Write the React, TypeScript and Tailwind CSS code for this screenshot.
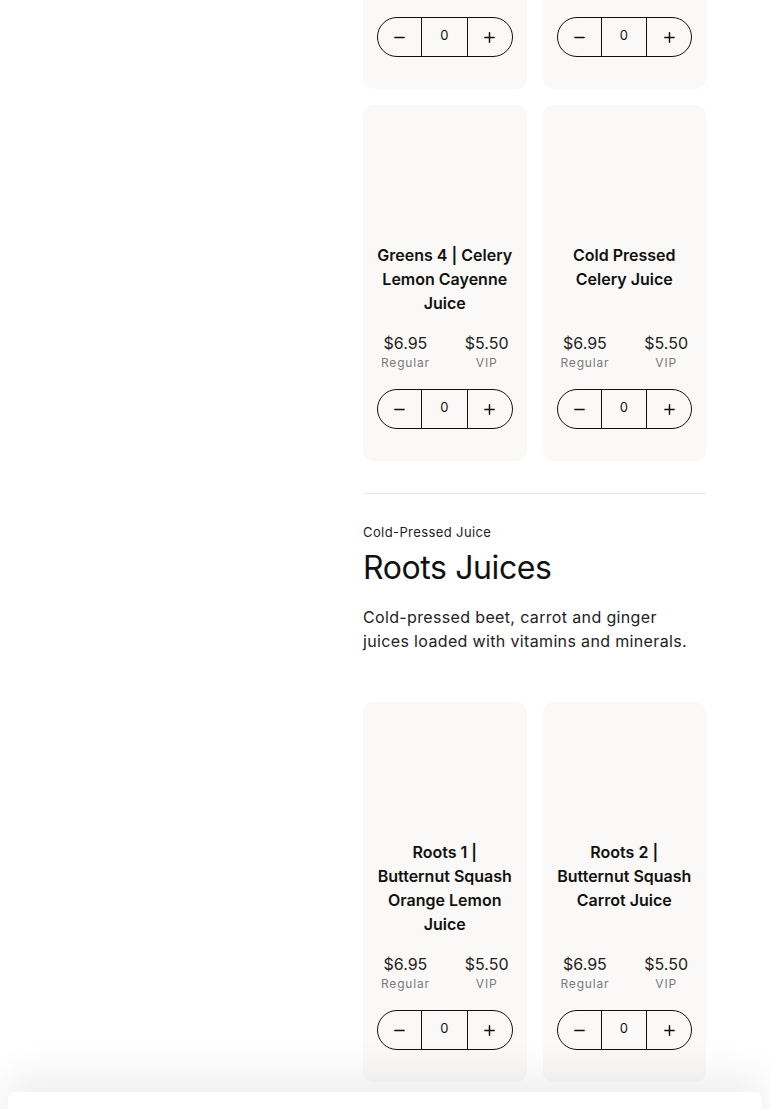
import React from "react";

type P = { title: string[] };

const Minus = () => (
  <svg width="13" height="13" viewBox="0 0 14 14" fill="none">
    <path d="M2 7h10" stroke="#111" strokeWidth="1.6" strokeLinecap="round" />
  </svg>
);
const Plus = () => (
  <svg width="13" height="13" viewBox="0 0 14 14" fill="none">
    <path d="M2 7h10M7 2v10" stroke="#111" strokeWidth="1.6" strokeLinecap="round" />
  </svg>
);

function Stepper() {
  return (
    <div className="flex h-[40px] w-full rounded-full border-[1.5px] border-[#111] overflow-hidden">
      <button className="w-[44px] flex items-center justify-center border-r-[1.5px] border-[#111]">
        <Minus />
      </button>
      <div className="flex-1 flex items-center justify-center text-[13px] text-[#111] pb-[3px]">0</div>
      <button className="w-[45px] flex items-center justify-center border-l-[1.5px] border-[#111]">
        <Plus />
      </button>
    </div>
  );
}

function Card({ title }: P) {
  return (
    <div className="bg-[#faf9f7] rounded-[10px] px-[14px] pb-[32px] flex flex-col">
      <div className="h-[138px] shrink-0" />
      <div className="text-center text-[16px] leading-[24px] font-semibold tracking-[0px] text-[#111]">
        {title.map((t, i) => (
          <div key={i} className="whitespace-nowrap">{t}</div>
        ))}
      </div>
      <div className="mt-auto pt-[18px] flex justify-between px-[4px]">
        <div className="flex flex-col items-center">
          <span className="text-[16px] leading-[20px] text-[#222]">$6.95</span>
          <span className="text-[12px] leading-[20px] tracking-[0.8px] text-[#7a7a7a]">Regular</span>
        </div>
        <div className="flex flex-col items-center">
          <span className="text-[16px] leading-[20px] text-[#222]">$5.50</span>
          <span className="text-[12px] leading-[20px] tracking-[0.8px] text-[#7a7a7a]">VIP</span>
        </div>
      </div>
      <div className="mt-[16px]">
        <Stepper />
      </div>
    </div>
  );
}

export default function App() {
  return (
    <div
      className="min-h-[1109px] bg-white overflow-hidden"
      style={{ fontFamily: "Inter, 'Noto Sans', sans-serif" }}
    >
      <div className="flex">
        <aside className="w-[363px] shrink-0" />
        <main className="w-[343px] shrink-0 mt-[-267px]">
          <div className="grid grid-cols-2 gap-x-4 gap-y-4">
            <Card title={["Greens 2 | Kale", "Spinach Apple", "Juice"]} />
            <Card title={["Greens 3 | Celery", "Cucumber Juice"]} />
            <Card title={["Greens 4 | Celery", "Lemon Cayenne", "Juice"]} />
            <Card title={["Cold Pressed", "Celery Juice"]} />
          </div>
          <div className="mt-[32px] border-t border-[#ebebeb]" />
          <div className="pt-[28px]">
            <div className="text-[13px] leading-[20px] tracking-[0.4px] text-[#222]">Cold-Pressed Juice</div>
            <h2 className="mt-[6px] text-[32px] leading-[40px] tracking-[-0.4px] text-[#111] font-normal">Roots Juices</h2>
            <p className="mt-[17px] text-[16px] leading-[24px] tracking-[0.35px] text-[#222]">
              Cold-pressed beet, carrot and ginger juices loaded with vitamins and minerals.
            </p>
          </div>
          <div className="mt-[49px] grid grid-cols-2 gap-x-4">
            <Card title={["Roots 1 |", "Butternut Squash", "Orange Lemon", "Juice"]} />
            <Card title={["Roots 2 |", "Butternut Squash", "Carrot Juice"]} />
          </div>
          <div className="h-[200px]" />
        </main>
      </div>
      <div className="fixed left-2 right-2 top-[1092px] h-[200px] bg-white rounded-t-[8px] shadow-[0_-16px_40px_rgba(0,0,0,0.07)]" />
    </div>
  );
}
